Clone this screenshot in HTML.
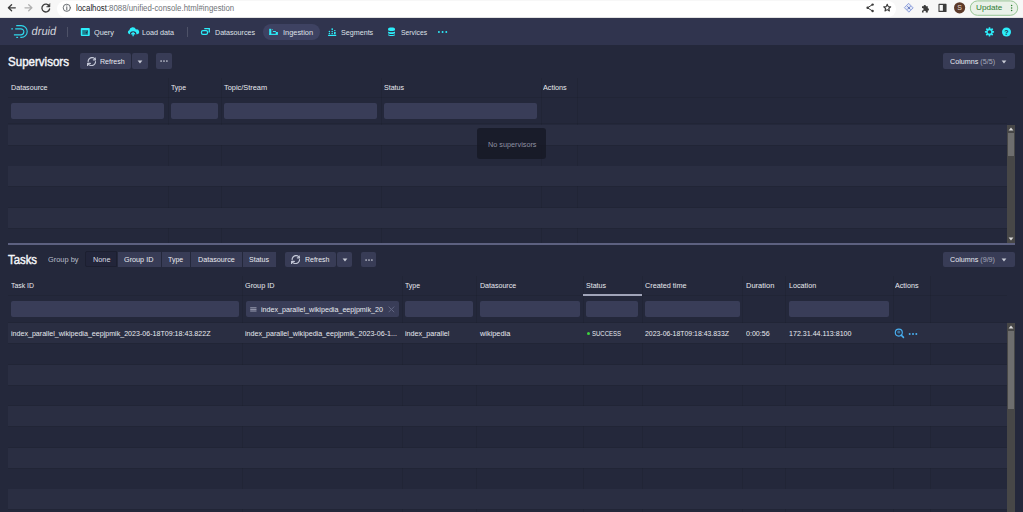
<!DOCTYPE html>
<html><head><meta charset="utf-8"><style>
html,body{margin:0;padding:0;width:1023px;height:512px;overflow:hidden;background:#24283b}
body{position:relative;font-family:"Liberation Sans",sans-serif}
.t{position:absolute;white-space:nowrap;transform-origin:0 0;}
</style></head><body>
<div style="position:absolute;left:0px;top:0px;width:1023px;height:18px;background:#f7f7f7;"></div>
<div style="position:absolute;left:57px;top:1px;width:839px;height:15.5px;background:#fff;border-radius:8px"></div>
<div style="position:absolute;left:0px;top:17.4px;width:1023px;height:0.8px;background:#e2e2e2;"></div>

<svg style="position:absolute;left:0;top:0" width="1023" height="18" viewBox="0 0 1023 18">
 <g fill="none" stroke-linecap="round" stroke-linejoin="round">
  <path d="M15.3 7.8H8.6M11.6 4.8 8.4 7.8l3.2 3" stroke="#3c3c3c" stroke-width="1.3"/>
  <path d="M25 7.8h6.7M28.7 4.8l3.2 3-3.2 3" stroke="#b0b0b0" stroke-width="1.3"/>
  <path d="M49.3 6.3A3.9 3.9 0 1 0 49.6 9" stroke="#3c3c3c" stroke-width="1.3"/>
  <path d="M49.9 3.9v3h-3z" fill="#3c3c3c" stroke="#3c3c3c" stroke-width="0.6"/>
  <circle cx="66.8" cy="7.8" r="3.6" stroke="#5f6368" stroke-width="0.9"/>
  <path d="M66.8 7v3" stroke="#5f6368" stroke-width="1"/>
  <circle cx="66.8" cy="5.7" r="0.5" fill="#5f6368"/>
  <path d="M872.5 4.6l-5 3.2 5 3.2" stroke="#3c3c3c" stroke-width="1"/>
  <circle cx="872.6" cy="4.6" r="1.2" fill="#3c3c3c"/><circle cx="867.6" cy="7.8" r="1.2" fill="#3c3c3c"/><circle cx="872.6" cy="11" r="1.2" fill="#3c3c3c"/>
  <path d="M887.2 4.2l1 2.4 2.5.2-1.9 1.7.6 2.5-2.2-1.4-2.2 1.4.6-2.5-1.9-1.7 2.5-.2z" stroke="#3c3c3c" stroke-width="1.1"/>
  <path d="M908.9 3.6l4.3 4.3-4.3 4.3-4.3-4.3z" stroke="#8597d8" stroke-width="0.9" fill="#dfe5f7"/>
  <path d="M907.6 6.6l2.6 2.6M910.2 6.6l-2.6 2.6" stroke="#5a6fb8" stroke-width="0.9"/>
  <path d="M939 4.4h7v7h-7z" stroke="#3c3c3c" stroke-width="1.1"/>
  <rect x="942.9" y="4.4" width="3.1" height="7" fill="#3c3c3c"/>
 </g>
 <path d="M922 6.2h1.6a1.2 1.2 0 1 1 2.4 0h1.8v2a1.2 1.2 0 1 1 0 2.4v1.8h-2a1.2 1.2 0 1 0-2.2 0H922v-1.9a1.2 1.2 0 1 0 0-2.3z" fill="#3c3c3c"/>
 <circle cx="959.6" cy="7.8" r="5.6" fill="#5d3a2a"/>
 <text x="959.6" y="10.4" font-family="Liberation Sans" font-size="7" fill="#e8dcd6" text-anchor="middle">S</text>
 <rect x="970.3" y="0.9" width="47.4" height="14.4" rx="7.2" fill="#e9f1e8" stroke="#8cbf8a" stroke-width="0.9"/>
 <circle cx="1011.6" cy="5.4" r="0.75" fill="#2f7d32"/><circle cx="1011.6" cy="7.9" r="0.75" fill="#2f7d32"/><circle cx="1011.6" cy="10.4" r="0.75" fill="#2f7d32"/>
</svg>
<div class="t" style="left:75.6px;top:4.35px;font-size:8.9px;line-height:9.941px;color:#202124;font-weight:400;transform:scaleX(0.8833);">localhost<span style="color:#6f7378">:8088/unified-console.html#ingestion</span></div>
<div class="t" style="left:976.3px;top:3.55px;font-size:7.9px;line-height:8.824px;color:#2e7d32;font-weight:400;transform:scaleX(1.0333);">Update</div>
<div style="position:absolute;left:0px;top:18.2px;width:1023px;height:26.5px;background:#30344e;"></div>
<div style="position:absolute;left:263px;top:24.1px;width:56.8px;height:15.6px;background:#3e4262;border-radius:8px"></div>
<div style="position:absolute;left:67.2px;top:27px;width:0.8px;height:10px;background:rgba(255,255,255,0.15);"></div>
<div style="position:absolute;left:187px;top:27px;width:0.8px;height:10px;background:rgba(255,255,255,0.15);"></div>
<div class="t" style="left:94px;top:28.65px;font-size:7.9px;line-height:8.824px;color:#dfe1e8;font-weight:400;transform:scaleX(0.9302);">Query</div>
<div class="t" style="left:142px;top:28.65px;font-size:7.9px;line-height:8.824px;color:#dfe1e8;font-weight:400;transform:scaleX(0.9114);">Load data</div>
<div class="t" style="left:214.9px;top:28.65px;font-size:7.9px;line-height:8.824px;color:#dfe1e8;font-weight:400;transform:scaleX(0.9030);">Datasources</div>
<div class="t" style="left:282.9px;top:28.65px;font-size:7.9px;line-height:8.824px;color:#dfe1e8;font-weight:400;transform:scaleX(0.9366);">Ingestion</div>
<div class="t" style="left:340.75px;top:28.65px;font-size:7.9px;line-height:8.824px;color:#dfe1e8;font-weight:400;transform:scaleX(0.9062);">Segments</div>
<div class="t" style="left:400.9px;top:28.65px;font-size:7.9px;line-height:8.824px;color:#dfe1e8;font-weight:400;transform:scaleX(0.8624);">Services</div>
<div class="t" style="left:31.0px;top:25.30px;font-size:11.6px;line-height:12.957px;color:#d2d4dc;font-weight:400;transform:scaleX(0.9542) skewX(-10deg);transform-origin:0 80%;">druid</div>

<svg style="position:absolute;left:0;top:0" width="1023" height="48" viewBox="0 0 1023 48">
 <g stroke="#2fd6ea" fill="none" stroke-width="1.15">
  <path d="M16.2 25.6h5.1a5.9 5.9 0 0 1 0 11.8H20.3"/>
  <path d="M16.2 37.4h1.9"/>
  <path d="M15.2 28.8h5.6a3.05 3.05 0 0 1 0 6.1H13.9"/>
  <path d="M11.3 28.8h1.6"/>
 </g>
 <rect x="80.8" y="27.9" width="9" height="8.1" rx="0.9" fill="#2ceefb"/>
 <rect x="82.25" y="30.1" width="5.8" height="4.7" fill="#1c7f8e"/>
 <path d="M88 30.6l-2.6 2.2 1.2.2-.2 1.8z" fill="#23304a"/>
 <path d="M129.6 34.2a2 2 0 0 1 -.3-3.9 3.5 3.5 0 0 1 6.7-.9 2.3 2.3 0 0 1 1.3 4.8z" fill="#2ceefb"/>
 <path d="M130.4 34.6a2.75 2.75 0 0 1 5.5 0" stroke="#30344e" stroke-width="1.1" fill="none"/>
 <path d="M133.1 36.3v-3.2" stroke="#2ceefb" stroke-width="1.3" fill="none"/>
 <path d="M131.1 34.3l2-2.2 2 2.2z" fill="#2ceefb"/>
 <g fill="none" stroke="#2ceefb" stroke-width="1.25">
  <path d="M204.9 29.2v-.6h4.4v3.2h-.8"/>
  <rect x="201.5" y="30.7" width="6" height="3.7" rx="1.4"/>
 </g>
 <g fill="#2ceefb">
  <rect x="269.2" y="28.8" width="2.1" height="6.1"/>
  <rect x="269.2" y="33.8" width="8.7" height="1.1"/>
  <rect x="272.9" y="31" width="3" height="1"/>
  <rect x="275.7" y="32" width="2.2" height="2"/>
  <rect x="272" y="29.1" width="1" height="1" opacity="0.6"/>
  <rect x="328.1" y="34.8" width="8.1" height="1.2"/>
  <circle cx="329.4" cy="31.5" r="0.75"/><circle cx="329.4" cy="33.4" r="0.75"/>
  <rect x="331.4" y="28.3" width="1.6" height="1.6" rx="0.6"/><circle cx="332.2" cy="31.5" r="0.75"/><circle cx="332.2" cy="33.4" r="0.75"/>
  <rect x="334" y="30" width="1.6" height="1" rx="0.4"/><rect x="334" y="31.7" width="1.6" height="2.6" rx="0.6"/>
  <path d="M388.1 28.8c0-1.6 6.9-1.6 6.9 0v1.2c0 1.3-6.9 1.3-6.9 0z"/>
  <path d="M388.1 31.2c0 1.3 6.9 1.3 6.9 0v1.7c0 1.3-6.9 1.3-6.9 0z"/>
  <path d="M388.1 34.1c0 1.3 6.9 1.3 6.9 0v.8c0 1.5-6.9 1.5-6.9 0z"/>
  <circle cx="438.9" cy="32" r="0.95"/><circle cx="442.6" cy="32" r="0.95"/><circle cx="446.3" cy="32" r="0.95"/>
 </g>
 <path transform="translate(984.9 27.3) scale(0.575)" fill="#2ceefb" fill-rule="evenodd" d="M15.19 6.39h-1.850c-.11-.37-.27-.71-.45-1.04l1.36-1.36c.31-.31.31-.82 0-1.13l-1.13-1.13a.803.803 0 0 0-1.13 0l-1.36 1.36c-.33-.17-.67-.33-1.04-.44V.79c0-.44-.36-.8-.8-.8h-1.6c-.44 0-.8.36-.8.8v1.86c-.39.12-.75.28-1.1.47l-1.3-1.3c-.3-.3-.79-.3-1.09 0L1.82 2.91c-.3.3-.3.79 0 1.09l1.3 1.3c-.2.34-.36.7-.48 1.09H.79c-.44 0-.8.36-.8.8v1.6c0 .44.36.8.8.8h1.85c.11.37.27.71.45 1.04l-1.36 1.36c-.31.31-.31.82 0 1.13l1.13 1.13c.31.31.82.31 1.13 0l1.36-1.36c.33.18.67.33 1.04.44v1.86c0 .44.36.8.8.8h1.6c.44 0 .8-.36.8-.8v-1.860c.39-.12.75-.28 1.1-.47l1.3 1.3c.3.3.79.3 1.09 0l1.09-1.09c.3-.3.3-.79 0-1.09l-1.3-1.3c.19-.35.36-.71.48-1.1h1.85c.44 0 .8-.36.8-.8v-1.6a.816.816 0 0 0-.81-.79zM7.99 10.990c-1.66 0-3-1.34-3-3s1.34-3 3-3 3 1.34 3 3-1.34 3-3 3z"/>
 <circle cx="1006.5" cy="32" r="4.5" fill="#2ceefb"/>
 <text x="1006.5" y="34.7" font-family="Liberation Sans" font-weight="700" font-size="7.2" fill="#1b3a4c" text-anchor="middle">?</text>
</svg>
<div style="position:absolute;left:0px;top:44.7px;width:1023px;height:467.3px;background:#24283b;"></div>
<div class="t" style="left:8.1px;top:54.53px;font-size:13.0px;line-height:14.521px;color:#f5f6fa;font-weight:400;transform:scaleX(0.8887);-webkit-text-stroke:0.45px #f5f6fa;">Supervisors</div>
<div style="position:absolute;left:80px;top:53px;width:51.3px;height:16px;background:#383c56;border-radius:2px;"></div>
<div style="position:absolute;left:132px;top:53px;width:16px;height:16px;background:#383c56;border-radius:2px;"></div>
<div style="position:absolute;left:156px;top:53px;width:16px;height:16px;background:#383c56;border-radius:2px;"></div>
<div class="t" style="left:99.5px;top:58.09px;font-size:7.3px;line-height:8.154px;color:#e8eaf0;font-weight:400;transform:scaleX(0.9702);">Refresh</div>
<div style="position:absolute;left:943px;top:53.3px;width:71.8px;height:15.6px;background:#383c56;border-radius:2px;"></div>
<div class="t" style="left:949.8px;top:58.09px;font-size:7.3px;line-height:8.154px;color:#e8eaf0;font-weight:400;transform:scaleX(0.9838);">Columns <span style="color:#a5a9bb">(5/5)</span></div>
<svg style="position:absolute;left:86.7px;top:56.8px" width="9.2" height="9.2" viewBox="0 0 16 16"><path fill="#c3c7d6" d="M14.99 6.99c-.55 0-1 .45-1 1 0 3.31-2.69 6-6 6-1.77 0-3.36-.78-4.46-2h2.46c.55 0 1-.45 1-1s-.45-1-1-1h-5c-.55 0-1 .45-1 1v5c0 .55.45 1 1 1s1-.45 1-1v-2.7c1.46 1.67 3.59 2.7 5.99 2.7 4.42 0 8-3.58 8-8 .01-.55-.44-1-.99-1zM1.99 8.99c.55 0 1-.45 1-1 0-3.310 2.69-6 6-6 1.77 0 3.36.78 4.46 2h-2.46c-.55 0-1 .45-1 1s.45 1 1 1h5c.55 0 1-.45 1-1v-5c0-.55-.45-1-1-1s-1 .45-1 1v2.7C13.54 1.03 11.41 0 9 0 4.58 0 1 3.580 1 8c0 .55.45 1 .99.99z"/></svg>
<svg style="position:absolute;left:137px;top:59.5px" width="6" height="4" viewBox="0 0 6 4"><path d="M0.6 0.6h4.8L3 3.4z" fill="#c8cbd6"/></svg>
<svg style="position:absolute;left:158px;top:59px" width="12" height="4" viewBox="-6 -2 12 4" fill="#c8cbd6"><circle cx="-2.9" r="0.85"/><circle r="0.85"/><circle cx="2.9" r="0.85"/></svg>
<svg style="position:absolute;left:1001px;top:59.5px" width="6" height="4" viewBox="0 0 6 4"><path d="M0.6 0.6h4.8L3 3.4z" fill="#c8cbd6"/></svg>
<div style="position:absolute;left:167.5px;top:78px;width:1px;height:165px;background:rgba(0,0,0,0.07);"></div>
<div style="position:absolute;left:220.5px;top:78px;width:1px;height:165px;background:rgba(0,0,0,0.07);"></div>
<div style="position:absolute;left:380.5px;top:78px;width:1px;height:165px;background:rgba(0,0,0,0.07);"></div>
<div style="position:absolute;left:540.5px;top:78px;width:1px;height:165px;background:rgba(0,0,0,0.07);"></div>
<div style="position:absolute;left:576.75px;top:78px;width:1px;height:165px;background:rgba(0,0,0,0.07);"></div>
<div style="position:absolute;left:8px;top:97px;width:999px;height:1px;background:rgba(0,0,0,0.07);"></div>
<div style="position:absolute;left:8px;top:123px;width:999px;height:1px;background:rgba(0,0,0,0.07);"></div>
<div style="position:absolute;left:11px;top:103.3px;width:153px;height:15.7px;background:#393d58;border-radius:2px"></div>
<div style="position:absolute;left:171px;top:103.3px;width:46.5px;height:15.7px;background:#393d58;border-radius:2px"></div>
<div style="position:absolute;left:224px;top:103.3px;width:153px;height:15.7px;background:#393d58;border-radius:2px"></div>
<div style="position:absolute;left:384.25px;top:103.3px;width:152.75px;height:15.7px;background:#393d58;border-radius:2px"></div>
<div style="position:absolute;left:8px;top:124.7px;width:999px;height:20.0px;background:#2a2e42;"></div>
<div style="position:absolute;left:8px;top:144.7px;width:999px;height:0.8px;background:rgba(0,0,0,0.07);"></div>
<div style="position:absolute;left:8px;top:165.5px;width:999px;height:0.8px;background:rgba(0,0,0,0.07);"></div>
<div style="position:absolute;left:8px;top:166.3px;width:999px;height:20.0px;background:#2a2e42;"></div>
<div style="position:absolute;left:8px;top:186.3px;width:999px;height:0.8px;background:rgba(0,0,0,0.07);"></div>
<div style="position:absolute;left:8px;top:207.10000000000002px;width:999px;height:0.8px;background:rgba(0,0,0,0.07);"></div>
<div style="position:absolute;left:8px;top:207.9px;width:999px;height:20.0px;background:#2a2e42;"></div>
<div style="position:absolute;left:8px;top:227.9px;width:999px;height:0.8px;background:rgba(0,0,0,0.07);"></div>
<div class="t" style="left:10.9px;top:84.20px;font-size:7.4px;line-height:8.266px;color:#e8eaf0;font-weight:400;transform:scaleX(0.9683);">Datasource</div>
<div class="t" style="left:171.1px;top:84.20px;font-size:7.4px;line-height:8.266px;color:#e8eaf0;font-weight:400;transform:scaleX(0.9357);">Type</div>
<div class="t" style="left:224px;top:84.20px;font-size:7.4px;line-height:8.266px;color:#e8eaf0;font-weight:400;">Topic/Stream</div>
<div class="t" style="left:383.75px;top:84.20px;font-size:7.4px;line-height:8.266px;color:#e8eaf0;font-weight:400;transform:scaleX(0.9545);">Status</div>
<div class="t" style="left:543.25px;top:84.20px;font-size:7.4px;line-height:8.266px;color:#e8eaf0;font-weight:400;transform:scaleX(0.9773);">Actions</div>
<div style="position:absolute;left:476.9px;top:128.3px;width:68.9px;height:30.3px;background:rgba(22,24,36,0.82);border-radius:3px"></div>
<div class="t" style="left:487.5px;top:140.80px;font-size:7.4px;line-height:8.266px;color:#8e91a3;font-weight:400;transform:scaleX(0.9838);">No supervisors</div>
<div style="position:absolute;left:1007px;top:124.9px;width:7.8px;height:118.2px;background:#474747;"></div>
<div style="position:absolute;left:1008.1px;top:132.7px;width:6px;height:23.4px;background:#6e6e6e;"></div>
<svg style="position:absolute;left:1007.9px;top:127.30000000000001px" width="6" height="4" viewBox="0 0 6 4"><path d="M0.6 3.4h4.8L3 0.6z" fill="#dcdcdc"/></svg>
<svg style="position:absolute;left:1008px;top:237px" width="6" height="4" viewBox="0 0 6 4"><path d="M0.6 0.6h4.8L3 3.4z" fill="#dcdcdc"/></svg>
<div style="position:absolute;left:8px;top:243.2px;width:1006.8px;height:1.9px;background:#5d6180;"></div>
<div class="t" style="left:8px;top:253.04px;font-size:13.0px;line-height:14.521px;color:#f5f6fa;font-weight:400;transform:scaleX(0.8726);-webkit-text-stroke:0.45px #f5f6fa;">Tasks</div>
<div class="t" style="left:47.5px;top:256.09px;font-size:7.3px;line-height:8.154px;color:#b9bdca;font-weight:400;transform:scaleX(1.0161);">Group by</div>
<div style="position:absolute;left:85.4px;top:251.3px;width:32px;height:15.8px;background:#22253a;border:0.8px solid #1c1f30;box-sizing:border-box;border-radius:2px 0 0 2px"></div>
<div style="position:absolute;left:117.5px;top:251.6px;width:43.5px;height:15.6px;background:#383c56;"></div>
<div style="position:absolute;left:161.7px;top:251.6px;width:28.80000000000001px;height:15.6px;background:#383c56;"></div>
<div style="position:absolute;left:191.4px;top:251.6px;width:50.400000000000006px;height:15.6px;background:#383c56;"></div>
<div style="position:absolute;left:242.7px;top:251.6px;width:33.30000000000001px;height:15.6px;background:#383c56;"></div>
<div class="t" style="left:92.5px;top:256.09px;font-size:7.3px;line-height:8.154px;color:#d9dbe3;font-weight:400;transform:scaleX(1.0027);">None</div>
<div class="t" style="left:124.4px;top:256.09px;font-size:7.3px;line-height:8.154px;color:#e8eaf0;font-weight:400;transform:scaleX(0.9929);">Group ID</div>
<div class="t" style="left:168.3px;top:256.09px;font-size:7.3px;line-height:8.154px;color:#e8eaf0;font-weight:400;transform:scaleX(0.9603);">Type</div>
<div class="t" style="left:198px;top:256.09px;font-size:7.3px;line-height:8.154px;color:#e8eaf0;font-weight:400;transform:scaleX(0.9859);">Datasource</div>
<div class="t" style="left:249.4px;top:256.09px;font-size:7.3px;line-height:8.154px;color:#e8eaf0;font-weight:400;transform:scaleX(0.9668);">Status</div>
<div style="position:absolute;left:284.75px;top:251.6px;width:51.3px;height:15.6px;background:#383c56;border-radius:2px;"></div>
<div style="position:absolute;left:336.7px;top:251.6px;width:15.6px;height:15.6px;background:#383c56;border-radius:2px;"></div>
<div style="position:absolute;left:360.7px;top:251.6px;width:15.7px;height:15.6px;background:#383c56;border-radius:2px;"></div>
<div class="t" style="left:304.75px;top:256.09px;font-size:7.3px;line-height:8.154px;color:#e8eaf0;font-weight:400;transform:scaleX(0.9545);">Refresh</div>
<svg style="position:absolute;left:291.0px;top:255.1px" width="9.2" height="9.2" viewBox="0 0 16 16"><path fill="#c3c7d6" d="M14.99 6.99c-.55 0-1 .45-1 1 0 3.31-2.69 6-6 6-1.77 0-3.36-.78-4.46-2h2.46c.55 0 1-.45 1-1s-.45-1-1-1h-5c-.55 0-1 .45-1 1v5c0 .55.45 1 1 1s1-.45 1-1v-2.7c1.46 1.67 3.59 2.7 5.99 2.7 4.42 0 8-3.58 8-8 .01-.55-.44-1-.99-1zM1.99 8.99c.55 0 1-.45 1-1 0-3.310 2.69-6 6-6 1.77 0 3.36.78 4.46 2h-2.46c-.55 0-1 .45-1 1s.45 1 1 1h5c.55 0 1-.45 1-1v-5c0-.55-.45-1-1-1s-1 .45-1 1v2.7C13.54 1.03 11.41 0 9 0 4.58 0 1 3.580 1 8c0 .55.45 1 .99.99z"/></svg>
<svg style="position:absolute;left:341.5px;top:258px" width="6" height="4" viewBox="0 0 6 4"><path d="M0.6 0.6h4.8L3 3.4z" fill="#c8cbd6"/></svg>
<svg style="position:absolute;left:362.6px;top:257.5px" width="12" height="4" viewBox="-6 -2 12 4" fill="#c8cbd6"><circle cx="-2.9" r="0.85"/><circle r="0.85"/><circle cx="2.9" r="0.85"/></svg>
<div style="position:absolute;left:943px;top:251.8px;width:71.8px;height:15.4px;background:#383c56;border-radius:2px;"></div>
<div class="t" style="left:950px;top:256.09px;font-size:7.3px;line-height:8.154px;color:#e8eaf0;font-weight:400;transform:scaleX(0.9816);">Columns <span style="color:#a5a9bb">(9/9)</span></div>
<svg style="position:absolute;left:1001px;top:258.2px" width="6" height="4" viewBox="0 0 6 4"><path d="M0.6 0.6h4.8L3 3.4z" fill="#c8cbd6"/></svg>
<div style="position:absolute;left:242.4px;top:276px;width:1px;height:236px;background:rgba(0,0,0,0.07);"></div>
<div style="position:absolute;left:401.9px;top:276px;width:1px;height:236px;background:rgba(0,0,0,0.07);"></div>
<div style="position:absolute;left:476.1px;top:276px;width:1px;height:236px;background:rgba(0,0,0,0.07);"></div>
<div style="position:absolute;left:582.9px;top:276px;width:1px;height:236px;background:rgba(0,0,0,0.07);"></div>
<div style="position:absolute;left:641.6px;top:276px;width:1px;height:236px;background:rgba(0,0,0,0.07);"></div>
<div style="position:absolute;left:742px;top:276px;width:1px;height:236px;background:rgba(0,0,0,0.07);"></div>
<div style="position:absolute;left:785.25px;top:276px;width:1px;height:236px;background:rgba(0,0,0,0.07);"></div>
<div style="position:absolute;left:892.9px;top:276px;width:1px;height:236px;background:rgba(0,0,0,0.07);"></div>
<div style="position:absolute;left:929.5px;top:276px;width:1px;height:236px;background:rgba(0,0,0,0.07);"></div>
<div style="position:absolute;left:8px;top:295px;width:999px;height:1px;background:rgba(0,0,0,0.07);"></div>
<div style="position:absolute;left:8px;top:322px;width:999px;height:1px;background:rgba(0,0,0,0.07);"></div>
<div style="position:absolute;left:583.3px;top:294.3px;width:58.3px;height:1.8px;background:#a0a4b8;"></div>
<div style="position:absolute;left:11px;top:301.2px;width:227.9px;height:15.7px;background:#393d58;border-radius:2px"></div>
<div style="position:absolute;left:245.5px;top:301.2px;width:153.0px;height:15.7px;background:#393d58;border-radius:2px"></div>
<div style="position:absolute;left:405px;top:301.2px;width:68px;height:15.7px;background:#393d58;border-radius:2px"></div>
<div style="position:absolute;left:479.9px;top:301.2px;width:99.70000000000005px;height:15.7px;background:#393d58;border-radius:2px"></div>
<div style="position:absolute;left:586.4px;top:301.2px;width:52.10000000000002px;height:15.7px;background:#393d58;border-radius:2px"></div>
<div style="position:absolute;left:644.75px;top:301.2px;width:95.25px;height:15.7px;background:#393d58;border-radius:2px"></div>
<div style="position:absolute;left:789px;top:301.2px;width:99.89999999999998px;height:15.7px;background:#393d58;border-radius:2px"></div>
<div style="position:absolute;left:8px;top:323.0px;width:999px;height:20.0px;background:#2a2e42;"></div>
<div style="position:absolute;left:8px;top:343.0px;width:999px;height:0.8px;background:rgba(0,0,0,0.07);"></div>
<div style="position:absolute;left:8px;top:363.8px;width:999px;height:0.8px;background:rgba(0,0,0,0.07);"></div>
<div style="position:absolute;left:8px;top:364.6px;width:999px;height:20.0px;background:#2a2e42;"></div>
<div style="position:absolute;left:8px;top:384.6px;width:999px;height:0.8px;background:rgba(0,0,0,0.07);"></div>
<div style="position:absolute;left:8px;top:405.4px;width:999px;height:0.8px;background:rgba(0,0,0,0.07);"></div>
<div style="position:absolute;left:8px;top:406.2px;width:999px;height:20.0px;background:#2a2e42;"></div>
<div style="position:absolute;left:8px;top:426.2px;width:999px;height:0.8px;background:rgba(0,0,0,0.07);"></div>
<div style="position:absolute;left:8px;top:447.0px;width:999px;height:0.8px;background:rgba(0,0,0,0.07);"></div>
<div style="position:absolute;left:8px;top:447.8px;width:999px;height:20.0px;background:#2a2e42;"></div>
<div style="position:absolute;left:8px;top:467.8px;width:999px;height:0.8px;background:rgba(0,0,0,0.07);"></div>
<div style="position:absolute;left:8px;top:488.6px;width:999px;height:0.8px;background:rgba(0,0,0,0.07);"></div>
<div style="position:absolute;left:8px;top:489.4px;width:999px;height:20.0px;background:#2a2e42;"></div>
<div style="position:absolute;left:8px;top:509.4px;width:999px;height:0.8px;background:rgba(0,0,0,0.07);"></div>
<div class="t" style="left:11px;top:282.00px;font-size:7.4px;line-height:8.266px;color:#e8eaf0;font-weight:400;transform:scaleX(0.9334);">Task ID</div>
<div class="t" style="left:244.9px;top:282.00px;font-size:7.4px;line-height:8.266px;color:#e8eaf0;font-weight:400;transform:scaleX(0.9833);">Group ID</div>
<div class="t" style="left:405px;top:282.00px;font-size:7.4px;line-height:8.266px;color:#e8eaf0;font-weight:400;transform:scaleX(0.9357);">Type</div>
<div class="t" style="left:479.9px;top:282.00px;font-size:7.4px;line-height:8.266px;color:#e8eaf0;font-weight:400;transform:scaleX(0.9578);">Datasource</div>
<div class="t" style="left:586px;top:282.00px;font-size:7.4px;line-height:8.266px;color:#e8eaf0;font-weight:400;transform:scaleX(0.9545);">Status</div>
<div class="t" style="left:644.75px;top:282.00px;font-size:7.4px;line-height:8.266px;color:#e8eaf0;font-weight:400;transform:scaleX(0.9808);">Created time</div>
<div class="t" style="left:745.9px;top:282.00px;font-size:7.4px;line-height:8.266px;color:#e8eaf0;font-weight:400;transform:scaleX(1.0130);">Duration</div>
<div class="t" style="left:788.75px;top:282.00px;font-size:7.4px;line-height:8.266px;color:#e8eaf0;font-weight:400;transform:scaleX(0.9731);">Location</div>
<div class="t" style="left:895px;top:282.00px;font-size:7.4px;line-height:8.266px;color:#e8eaf0;font-weight:400;transform:scaleX(0.9691);">Actions</div>
<div class="t" style="left:261px;top:305.80px;font-size:7.4px;line-height:8.266px;color:#e8eaf0;font-weight:400;transform:scaleX(0.9664);">index_parallel_wikipedia_eepjpmik_20</div>
<svg style="position:absolute;left:249.6px;top:306.6px" width="7" height="5" viewBox="0 0 7 5"><path d="M0.2 0.8h6.3M0.2 2.4h6.3M0.2 4h6.3" stroke="#9a9db1" stroke-width="1"/></svg>
<svg style="position:absolute;left:387.6px;top:305.8px" width="7" height="7" viewBox="0 0 7 7"><path d="M0.6 0.6l5.6 5.6M6.2 0.6L0.6 6.2" stroke="#626682" stroke-width="1"/></svg>
<div class="t" style="left:10.7px;top:330.10px;font-size:7.4px;line-height:8.266px;color:#e8eaf0;font-weight:400;transform:scaleX(0.9596);">index_parallel_wikipedia_eepjpmik_2023-06-18T09:18:43.822Z</div>
<div class="t" style="left:245px;top:330.10px;font-size:7.4px;line-height:8.266px;color:#e8eaf0;font-weight:400;transform:scaleX(0.9627);">index_parallel_wikipedia_eepjpmik_2023-06-1...</div>
<div class="t" style="left:405px;top:330.10px;font-size:7.4px;line-height:8.266px;color:#e8eaf0;font-weight:400;transform:scaleX(0.9735);">index_parallel</div>
<div class="t" style="left:479.7px;top:330.10px;font-size:7.4px;line-height:8.266px;color:#e8eaf0;font-weight:400;transform:scaleX(0.9965);">wikipedia</div>
<div style="position:absolute;left:586.5px;top:331.9px;width:3.3px;height:3.3px;border-radius:50%;background:#3ed33e"></div>
<div class="t" style="left:592px;top:330.10px;font-size:7.4px;line-height:8.266px;color:#e8eaf0;font-weight:400;transform:scaleX(0.8115);">SUCCESS</div>
<div class="t" style="left:644.75px;top:330.10px;font-size:7.4px;line-height:8.266px;color:#e8eaf0;font-weight:400;transform:scaleX(0.9333);">2023-06-18T09:18:43.833Z</div>
<div class="t" style="left:745.8px;top:330.10px;font-size:7.4px;line-height:8.266px;color:#e8eaf0;font-weight:400;transform:scaleX(0.9606);">0:00:56</div>
<div class="t" style="left:788.7px;top:330.10px;font-size:7.4px;line-height:8.266px;color:#e8eaf0;font-weight:400;transform:scaleX(0.9583);">172.31.44.113:8100</div>
<svg style="position:absolute;left:894px;top:328px" width="11" height="11" viewBox="0 0 11 11"><circle cx="4.8" cy="4.6" r="3.5" fill="none" stroke="#48aff0" stroke-width="1.15"/><circle cx="4.8" cy="4.0" r="1.6" fill="#48aff0" opacity="0.55"/><path d="M7.2 7.1l2.3 2.3" stroke="#48aff0" stroke-width="1.5" stroke-linecap="round"/></svg>
<svg style="position:absolute;left:907.2px;top:331.6px" width="12" height="4" viewBox="-6 -2 12 4" fill="#48aff0"><circle cx="-3.3" r="1.0"/><circle r="1.0"/><circle cx="3.3" r="1.0"/></svg>
<div style="position:absolute;left:1007px;top:323px;width:7.8px;height:189px;background:#474747;"></div>
<div style="position:absolute;left:1008.1px;top:330.5px;width:6px;height:78.5px;background:#6e6e6e;"></div>
<svg style="position:absolute;left:1007.9px;top:324.6px" width="6" height="4" viewBox="0 0 6 4"><path d="M0.6 3.4h4.8L3 0.6z" fill="#dcdcdc"/></svg>
</body></html>
